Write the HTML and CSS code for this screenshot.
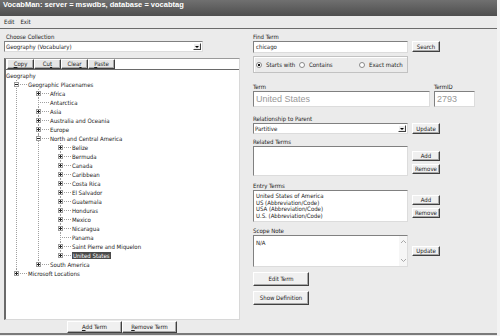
FILE: index.html
```html
<!DOCTYPE html>
<html lang="en">
<head>
  <meta charset="UTF-8">
  <title>VocabMan</title>
  <link rel="stylesheet" href="styles.css">
</head>
<body>
<div class="window">
  <div class="titlebar">VocabMan: server = mswdbs, database = vocabtag</div>
  <div class="menubar"><span>Edit</span><span>Exit</span></div>

  <div class="main">
    <!-- left: collection + tree -->
    <div class="left">
      <div class="label">Choose Collection</div>
      <div class="select wide">Geography (Vocabulary)<i class="drop"></i></div>

      <div class="pane">
        <div class="toolbar">
          <button class="tool"><u>C</u>opy</button>
          <button class="tool">Cu<u>t</u></button>
          <button class="tool">Clea<u>r</u></button>
          <button class="tool"><u>P</u>aste</button>
        </div>
        <ul class="tree">
          <li><span class="row">Geography</span>
            <ul>
              <li><i class="exp minus"></i><span class="row">Geographic Placenames</span>
                <ul>
                  <li><i class="exp plus"></i><span class="row">Africa</span></li>
                  <li><span class="row">Antarctica</span></li>
                  <li><i class="exp plus"></i><span class="row">Asia</span></li>
                  <li><i class="exp plus"></i><span class="row">Australia and Oceania</span></li>
                  <li><i class="exp plus"></i><span class="row">Europe</span></li>
                  <li><i class="exp minus"></i><span class="row">North and Central America</span>
                    <ul>
                      <li><i class="exp plus"></i><span class="row">Belize</span></li>
                      <li><i class="exp plus"></i><span class="row">Bermuda</span></li>
                      <li><i class="exp plus"></i><span class="row">Canada</span></li>
                      <li><i class="exp plus"></i><span class="row">Caribbean</span></li>
                      <li><i class="exp plus"></i><span class="row">Costa Rica</span></li>
                      <li><i class="exp plus"></i><span class="row">El Salvador</span></li>
                      <li><i class="exp plus"></i><span class="row">Guatemala</span></li>
                      <li><i class="exp plus"></i><span class="row">Honduras</span></li>
                      <li><i class="exp plus"></i><span class="row">Mexico</span></li>
                      <li><i class="exp plus"></i><span class="row">Nicaragua</span></li>
                      <li><span class="row">Panama</span></li>
                      <li><i class="exp plus"></i><span class="row">Saint Pierre and Miquelon</span></li>
                      <li><i class="exp plus"></i><span class="row"><span class="selected">United States</span></span></li>
                    </ul>
                  </li>
                  <li><i class="exp plus"></i><span class="row">South America</span></li>
                </ul>
              </li>
              <li><i class="exp plus"></i><span class="row">Microsoft Locations</span></li>
            </ul>
          </li>
        </ul>
      </div>

      <div class="bottom">
        <button class="btn"><u>A</u>dd Term</button>
        <button class="btn"><u>R</u>emove Term</button>
      </div>
    </div>

    <!-- right: term details -->
    <div class="right">
      <div class="label">Find Term</div>
      <div class="row">
        <div class="input find">chicago</div>
        <button class="btn small">Search</button>
      </div>

      <div class="radios">
        <span class="radio on"><i></i>Starts with</span>
        <span class="radio"><i></i>Contains</span>
        <span class="radio"><i></i>Exact match</span>
      </div>

      <div class="row term-row">
        <div>
          <div class="label">Term</div>
          <div class="input big term">United States</div>
        </div>
        <div>
          <div class="label">TermID</div>
          <div class="input big termid">2793</div>
        </div>
      </div>

      <div class="label rel-label">Relationship to Parent</div>
      <div class="row">
        <div class="select narrow">Partitive<i class="drop"></i></div>
        <button class="btn small">Update</button>
      </div>

      <div class="label gap3">Related Terms</div>
      <div class="row">
        <div class="box related"></div>
        <div class="btns">
          <button class="btn">Add</button>
          <button class="btn">Remove</button>
        </div>
      </div>

      <div class="label gap5">Entry Terms</div>
      <div class="row">
        <div class="box list">
          <div>United States of America</div>
          <div>US (Abbreviation/Code)</div>
          <div>USA (Abbreviation/Code)</div>
          <div>U.S. (Abbreviation/Code)</div>
        </div>
        <div class="btns">
          <button class="btn">Add</button>
          <button class="btn">Remove</button>
        </div>
      </div>

      <div class="label gap4">Scope Note</div>
      <div class="row">
        <div class="box note">N/A
          <div class="scroll">
            <svg width="7" height="5" viewBox="0 0 7 5"><path d="M1 4 L3.5 1.5 L6 4" fill="none" stroke="#a8a8a8" stroke-width="1"/></svg>
            <svg width="7" height="5" viewBox="0 0 7 5"><path d="M1 1 L3.5 3.5 L6 1" fill="none" stroke="#a8a8a8" stroke-width="1"/></svg>
          </div>
        </div>
        <div class="btns note-btns">
          <button class="btn">Update</button>
        </div>
      </div>

      <button class="btn action">Edit Term</button>
      <button class="btn action">Show Definition</button>
    </div>
  </div>
</div>
</body>
</html>
```

FILE: styles.css
```css
body {
  margin: 0;
  width: 500px;
  height: 336px;
  overflow: hidden;
  background: #f3f3f3;
  font-family: "DejaVu Sans Condensed", "Liberation Sans", sans-serif;
  font-size: 6px;
  color: #1a1a1a;
}

.window {
  width: 497px;
  height: 336px;
  background: #ebebeb;
}

.titlebar {
  height: 16px;
  line-height: 15px;
  padding-left: 3px;
  color: #fff;
  font: bold 7.5px "Liberation Sans", sans-serif;
  background: linear-gradient(#707070, #4e4e4e);
  white-space: nowrap;
}

.menubar {
  height: 12px;
  line-height: 12px;
  padding-left: 4px;
  display: flex;
  gap: 6px;
}

.main {
  height: 301px;
  padding: 3px 0 0 4px;
  border-top: 1px solid #6b6b6b;
  border-bottom: 2px solid #7a7a7a;
  display: flex;
}

.label {
  height: 9px;
  line-height: 9px;
  white-space: nowrap;
}

.left {
  width: 236px;
  display: flex;
  flex-direction: column;
}

.left .label {
  padding-left: 2px;
}

/* inputs */
.select,
.input,
.box {
  position: relative;
  box-sizing: border-box;
  background: #fff;
  border: 1px solid;
  border-color: #808080 #dcdcdc #dcdcdc #808080;
  white-space: nowrap;
}

.select {
  height: 11px;
  line-height: 9px;
  padding-left: 1px;
}

.select.wide {
  width: 199px;
}

.select.narrow {
  width: 155px;
}

.drop {
  position: absolute;
  right: 1px;
  top: 1px;
  width: 8px;
  height: 7px;
  box-sizing: border-box;
  background: #ececec;
  border: 1px solid;
  border-color: #fff #404040 #404040 #fff;
}

.drop::after {
  content: "";
  position: absolute;
  left: 1px;
  top: 2px;
  border-left: 2px solid transparent;
  border-right: 2px solid transparent;
  border-top: 2px solid #000;
}

/* buttons */
button {
  font: inherit;
  color: inherit;
  margin: 0;
  padding: 0;
}

.btn,
.tool {
  box-sizing: border-box;
  background: #f0f0f0;
  border: 1px solid;
  border-color: #fff #404040 #404040 #fff;
  box-shadow: inset -1px -1px #a8a8a8;
  line-height: 8px;
  white-space: nowrap;
}

/* tree pane */
.pane {
  margin-top: 6px;
  height: 262px;
  box-sizing: border-box;
  background: #fff;
  border: 1px solid;
  border-color: #9a9a9a #d8d8d8 #d8d8d8 #6a6a6a;
  border-left-width: 2px;
}

.toolbar {
  display: flex;
  height: 10px;
  padding-left: 1px;
  border-bottom: 1px solid #6a6a6a;
}

.tool {
  width: 27px;
  height: 10px;
  background: #e6e6e6;
}

.tree,
.tree ul {
  list-style: none;
  margin: 0;
  padding: 0;
}

.tree {
  padding-top: 1px;
}

.tree li {
  position: relative;
  padding-left: 22px;
}

.tree > li {
  padding-left: 0;
}

.tree .row {
  display: block;
  height: 9px;
  line-height: 9px;
  white-space: nowrap;
}

.tree li li::before {
  content: "";
  position: absolute;
  left: 10px;
  top: 4px;
  width: 11px;
  border-top: 1px dotted #a0a0a0;
}

.tree li li::after {
  content: "";
  position: absolute;
  left: 10px;
  top: 0;
  bottom: 0;
  border-left: 1px dotted #a0a0a0;
}

.tree li li:last-child::after {
  bottom: auto;
  height: 5px;
}

.exp {
  position: absolute;
  z-index: 1;
  left: 8px;
  top: 2px;
  width: 3px;
  height: 3px;
  border: 1px solid #9c9c9c;
  background: linear-gradient(#222, #222) center / 3px 1px no-repeat, #fff;
}

.exp.plus {
  background:
    linear-gradient(#222, #222) center / 3px 1px no-repeat,
    linear-gradient(#222, #222) center / 1px 3px no-repeat,
    #fff;
}

.selected {
  background: #4a4a4a;
  color: #fff;
  padding: 0 1px;
}

.bottom {
  display: flex;
  justify-content: center;
  margin-top: 1px;
}

.bottom .btn {
  width: 55px;
  height: 12px;
}

/* right column */
.right {
  margin-left: 13px;
  width: 225px;
}

.row {
  display: flex;
  gap: 4px;
  align-items: flex-start;
}

.input {
  padding-left: 2px;
}

.input.find {
  width: 155px;
  height: 12px;
  line-height: 10px;
}

.btn.small {
  width: 28px;
  height: 11px;
}

.radios {
  margin-top: 3px;
  width: 155px;
  height: 17px;
  box-sizing: border-box;
  padding-left: 2px;
  border: 1px solid #c2c2c2;
  box-shadow: inset 1px 1px #fff;
  display: flex;
  align-items: center;
}

.radio {
  display: flex;
  align-items: center;
  gap: 4px;
  white-space: nowrap;
}

.radio:nth-child(1) {
  width: 43px;
}

.radio:nth-child(2) {
  width: 60px;
}

.radio i {
  width: 4px;
  height: 4px;
  border: 1px solid #8a8a8a;
  border-radius: 50%;
  background: #fff;
}

.radio.on i {
  background: radial-gradient(#111 0 1px, #fff 1.5px);
}

.term-row {
  margin-top: 9px;
}

.input.big {
  height: 16px;
  line-height: 14px;
  font: 9px "Liberation Sans", sans-serif;
  line-height: 14px;
  color: #999;
}

.input.term {
  width: 177px;
}

.input.termid {
  width: 41px;
}

.rel-label {
  margin-top: 7px;
}

.gap3 {
  margin-top: 3px;
}

.gap4 {
  margin-top: 4px;
}

.gap5 {
  margin-top: 5px;
}

.box {
  width: 155px;
}

.box.related {
  height: 30px;
}

.box.list {
  height: 32px;
  padding: 2px 2px 0;
  line-height: 6.5px;
}

.box.note {
  height: 32px;
  padding: 4px 2px 0;
  line-height: 6px;
}

.scroll {
  position: absolute;
  right: 0;
  top: 0;
  bottom: 0;
  width: 8px;
  background: #f6f6f6;
  display: flex;
  flex-direction: column;
  justify-content: space-between;
  align-items: center;
  padding: 3px 0;
  box-sizing: border-box;
}

.scroll svg {
  display: block;
}

.btns {
  display: flex;
  flex-direction: column;
  gap: 3px;
  padding-top: 5px;
}

.btns .btn {
  width: 28px;
  height: 10px;
}

.note-btns {
  padding-top: 11px;
}

.btn.action {
  display: block;
  width: 56px;
  height: 14px;
  margin-top: 5px;
}
```
